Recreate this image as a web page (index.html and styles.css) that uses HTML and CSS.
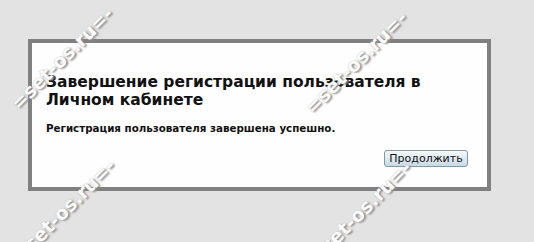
FILE: index.html
```html
<!DOCTYPE html>
<html lang="ru">
<head>
<meta charset="utf-8">
<link rel="stylesheet" href="styles.css">
</head>
<body>
<div class="page">
  <div class="dialog">
    <h1 class="title">Завершение регистрации пользователя в Личном кабинете</h1>
    <p class="message">Регистрация пользователя завершена успешно.</p>
    <div class="actions">
      <button class="btn">Продолжить</button>
    </div>
  </div>
</div>
<span class="wm wm-tl">=set-os.ru=-</span>
<span class="wm wm-tr">=set-os.ru=-</span>
<span class="wm wm-bl">=set-os.ru=-</span>
<span class="wm wm-br">=set-os.ru=-</span>
</body>
</html>
```
FILE: styles.css
```css
html, body {
  margin: 0;
  padding: 0;
  background: #e3e3e3;
  width: 534px;
  height: 242px;
  overflow: hidden;
}
body {
  font-family: "DejaVu Sans", Verdana, sans-serif;
  color: #111;
  position: relative;
}
.page {
  padding: 39px 0 0 28px;
}
.dialog {
  box-sizing: border-box;
  width: 463px;
  height: 152px;
  border: 4px solid #808080;
  background: #fefefe;
  padding: 30px 19px 0 14px;
}
.title {
  margin: 0;
  font-size: 15.5px;
  line-height: 18px;
  font-weight: bold;
  width: 410px;
}
.message {
  margin: 13px 0 0 0;
  font-size: 10.3px;
  line-height: 13px;
  font-weight: bold;
}
.actions {
  display: flex;
  justify-content: flex-end;
  margin-top: 15px;
}
.btn {
  box-sizing: border-box;
  width: 84px;
  height: 17px;
  padding: 0;
  font-family: "DejaVu Sans", Verdana, sans-serif;
  font-size: 11px;
  line-height: 15px;
  color: #111;
  border: 1px solid #7f9aa6;
  border-radius: 3px;
  background: linear-gradient(#f6f9fa, #dce8ee 55%, #c9dbe3);
}
.wm {
  position: absolute;
  font-family: "DejaVu Sans", sans-serif;
  font-weight: bold;
  font-size: 19px;
  line-height: 20px;
  color: #fbfbfb;
  text-shadow: 1px 2px 2px #8f8f8f, 0 0 1px #b5b5b5;
  transform: rotate(-45deg);
  transform-origin: left center;
  white-space: nowrap;
}
.wm-tl { left: 14px; top: 96px; }
.wm-tr { left: 308px; top: 100px; }
.wm-bl { left: 16px; top: 248px; }
.wm-br { left: 312px; top: 250px; }
```
